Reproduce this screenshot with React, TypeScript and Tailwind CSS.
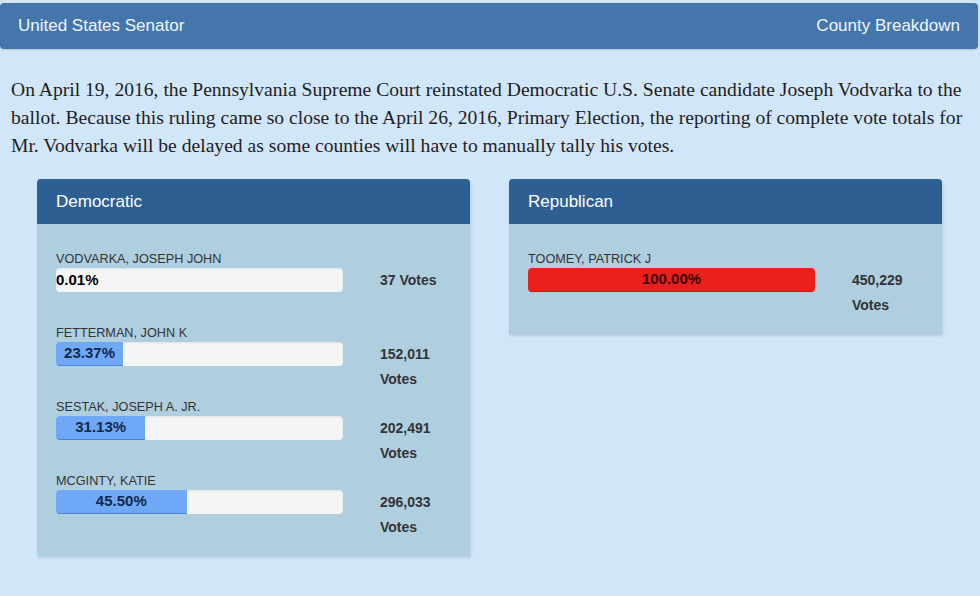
import React from "react";

type Candidate = {
  name: string;
  pct: number;
  label: string;
  votes: string;
};

const democrats: Candidate[] = [
  { name: "VODVARKA, JOSEPH JOHN", pct: 0.01, label: "0.01%", votes: "37 Votes" },
  { name: "FETTERMAN, JOHN K", pct: 23.37, label: "23.37%", votes: "152,011 Votes" },
  { name: "SESTAK, JOSEPH A. JR.", pct: 31.13, label: "31.13%", votes: "202,491 Votes" },
  { name: "MCGINTY, KATIE", pct: 45.5, label: "45.50%", votes: "296,033 Votes" },
];

const republicans: Candidate[] = [
  { name: "TOOMEY, PATRICK J", pct: 100, label: "100.00%", votes: "450,229 Votes" },
];

const Row = ({ c, red }: { c: Candidate; red?: boolean }) => {
  const tiny = c.pct < 5;
  return (
    <div className="h-[74px]">
      <div className="pt-[1px] text-[12.7px] leading-[17px] text-[#333]">{c.name}</div>
      <div className="flex">
        <div className="relative h-[24px] w-[287px] rounded-[4px] bg-[#f5f5f5] shadow-[inset_0_1px_2px_rgba(0,0,0,0.08)]">
          {!tiny && (
            <div
              className={
                red
                  ? "flex h-full items-center justify-center rounded-[4px] border-b border-[#c41813] bg-[#e81f1a] text-[15px] font-bold text-[#3a0a08]"
                  : "flex h-full items-center justify-center rounded-l-[4px] border-b border-[#4f86cf] bg-[#6ea8f6] text-[15px] font-bold text-[#14284a]"
              }
              style={{ width: `${c.pct}%` }}
            >
              {c.label}
            </div>
          )}
          {tiny && (
            <div className="absolute inset-y-0 left-0 flex items-center text-[15px] font-bold text-black">
              {c.label}
            </div>
          )}
        </div>
        <div className="ml-[37px] w-[70px] text-[14px] font-bold leading-[25px] text-[#333]">
          {c.votes}
        </div>
      </div>
    </div>
  );
};

const Panel = ({ title, list, red }: { title: string; list: Candidate[]; red?: boolean }) => (
  <div className="w-[433px] rounded-t-[4px] bg-[#afcfe1] shadow-[1px_2px_3px_rgba(0,0,0,0.12)]">
    <div className="h-[45px] rounded-t-[4px] bg-[#2e5f92] pl-[19px] text-[17px] leading-[45px] text-white">
      {title}
    </div>
    <div className="pl-[19px] pr-[18px] pb-[10px] pt-[26px]">
      {list.map((c) => (
        <Row key={c.name} c={c} red={red} />
      ))}
    </div>
  </div>
);

export default function App() {
  return (
    <div className="h-[596px] w-[980px] overflow-hidden bg-[#d2e6fa] pt-[3px] font-['Liberation_Sans',Arial,sans-serif]">
      <div className="mr-[2px] flex h-[46px] items-center justify-between rounded-[4px] bg-[#4476ab] px-[18px] text-[17px] text-[#f2f6fb] shadow-[0_1px_2px_rgba(0,0,0,0.15)]">
        <span>United States Senator</span>
        <span>County Breakdown</span>
      </div>
      <p className="mt-[27px] whitespace-nowrap px-[11px] font-['Liberation_Serif','Times_New_Roman',serif] text-[19.6px] leading-[28px] text-[#1e1e1e]">
        On April 19, 2016, the Pennsylvania Supreme Court reinstated Democratic U.S. Senate candidate Joseph Vodvarka to the
        <br />
        ballot. Because this ruling came so close to the April 26, 2016, Primary Election, the reporting of complete vote totals for
        <br />
        Mr. Vodvarka will be delayed as some counties will have to manually tally his votes.
      </p>
      <div className="mt-[19px] flex items-start gap-[39px] pl-[37px]">
        <Panel title="Democratic" list={democrats} />
        <Panel title="Republican" list={republicans} red />
      </div>
    </div>
  );
}
